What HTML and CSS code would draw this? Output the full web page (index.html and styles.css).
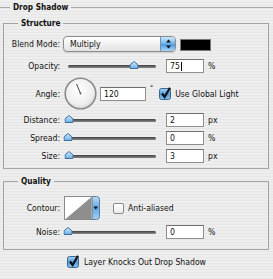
FILE: index.html
```html
<!DOCTYPE html>
<html lang="en">
<head>
    <meta charset="UTF-8">
    <meta name="viewport" content="width=device-width, initial-scale=1.0">
    <title>Drop Shadow</title>
    <link rel="stylesheet" href="styles.css">
</head>
<body>
    <div class="panel">
        <div class="panel-title"><span>Drop Shadow</span></div>

        <!-- Structure group -->
        <fieldset class="group group-structure">
            <legend>Structure</legend>
            <div class="rows">
                <div class="row row-blend">
                    <span class="label">Blend Mode:</span>
                    <div class="popup">
                        <span class="popup-text">Multiply</span>
                        <span class="popup-arrows">
                            <svg width="7" height="10" viewBox="0 0 7 10">
                                <path d="M3.5 0.5 L6 3.5 H1 Z" fill="#111"/>
                                <path d="M3.5 9.5 L6 6.5 H1 Z" fill="#111"/>
                            </svg>
                        </span>
                    </div>
                    <div class="swatch"></div>
                </div>

                <div class="row row-opacity">
                    <span class="label">Opacity:</span>
                    <div class="slider">
                        <div class="rail">
                            <div class="track"></div>
                            <svg class="thumb" style="left: 75%" width="9" height="8" viewBox="0 0 9 8">
                                <path d="M0.5 7.5 V3.8 L4.5 0.5 L8.5 3.8 V7.5 Z" fill="url(#thumbFill)" stroke="#3d6f9c" stroke-width="1"/>
                            </svg>
                        </div>
                    </div>
                    <div class="field">75<span class="caret"></span></div>
                    <span class="unit">%</span>
                </div>

                <div class="row row-angle">
                    <span class="label">Angle:</span>
                    <svg class="dial" width="33" height="33" viewBox="0 0 33 33">
                        <defs>
                            <radialGradient id="dialFill" cx="45%" cy="40%" r="65%">
                                <stop offset="0" stop-color="#ffffff"/>
                                <stop offset="0.7" stop-color="#eeeeee"/>
                                <stop offset="1" stop-color="#d2d2d2"/>
                            </radialGradient>
                        </defs>
                        <circle cx="16.5" cy="16.5" r="15.3" fill="url(#dialFill)" stroke="#8c8c8c" stroke-width="1.6"/>
                        <line x1="16.5" y1="16.5" x2="12.6" y2="7" stroke="#444" stroke-width="1"/>
                        <circle cx="16.5" cy="16.5" r="0.9" fill="#555"/>
                    </svg>
                    <div class="field field-angle">120</div>
                    <span class="degree">°</span>
                    <svg class="check" width="13" height="13" viewBox="0 0 13 13">
                        <defs>
                            <linearGradient id="checkFill" x1="0" y1="0" x2="0" y2="1">
                                <stop offset="0" stop-color="#a9d5f6"/>
                                <stop offset="0.5" stop-color="#4f9be0"/>
                                <stop offset="1" stop-color="#8cc6f2"/>
                            </linearGradient>
                        </defs>
                        <rect x="0.5" y="1.5" width="11" height="11" rx="2" fill="url(#checkFill)" stroke="#3a6690"/>
                        <path d="M3 6.5 L5.6 10 L11 0.8" fill="none" stroke="#111" stroke-width="2.2"/>
                    </svg>
                    <span class="check-text">Use Global Light</span>
                </div>

                <div class="row row-distance">
                    <span class="label">Distance:</span>
                    <div class="slider">
                        <div class="rail">
                            <div class="track"></div>
                            <svg class="thumb" style="left: 1%" width="9" height="8" viewBox="0 0 9 8">
                                <path d="M0.5 7.5 V3.8 L4.5 0.5 L8.5 3.8 V7.5 Z" fill="url(#thumbFill)" stroke="#3d6f9c" stroke-width="1"/>
                            </svg>
                        </div>
                    </div>
                    <div class="field">2</div>
                    <span class="unit">px</span>
                </div>

                <div class="row row-spread">
                    <span class="label">Spread:</span>
                    <div class="slider">
                        <div class="rail">
                            <div class="track"></div>
                            <svg class="thumb" style="left: 0%" width="9" height="8" viewBox="0 0 9 8">
                                <path d="M0.5 7.5 V3.8 L4.5 0.5 L8.5 3.8 V7.5 Z" fill="url(#thumbFill)" stroke="#3d6f9c" stroke-width="1"/>
                            </svg>
                        </div>
                    </div>
                    <div class="field">0</div>
                    <span class="unit">%</span>
                </div>

                <div class="row row-size">
                    <span class="label">Size:</span>
                    <div class="slider">
                        <div class="rail">
                            <div class="track"></div>
                            <svg class="thumb" style="left: 1%" width="9" height="8" viewBox="0 0 9 8">
                                <path d="M0.5 7.5 V3.8 L4.5 0.5 L8.5 3.8 V7.5 Z" fill="url(#thumbFill)" stroke="#3d6f9c" stroke-width="1"/>
                            </svg>
                        </div>
                    </div>
                    <div class="field">3</div>
                    <span class="unit">px</span>
                </div>
            </div>
        </fieldset>

        <!-- Quality group -->
        <fieldset class="group group-quality">
            <legend>Quality</legend>
            <div class="rows">
                <div class="row row-contour">
                    <span class="label">Contour:</span>
                    <svg class="contour" width="36" height="24" viewBox="0 0 36 24">
                        <defs>
                            <linearGradient id="stripFill" x1="0" y1="0" x2="0" y2="1">
                                <stop offset="0" stop-color="#b9ddf8"/>
                                <stop offset="0.5" stop-color="#5ea7e6"/>
                                <stop offset="1" stop-color="#a6d2f5"/>
                            </linearGradient>
                        </defs>
                        <path d="M28 0.5 H32.5 Q35.5 0.5 35.5 3.5 V20.5 Q35.5 23.5 32.5 23.5 H28 Z" fill="url(#stripFill)" stroke="#5b7fa0"/>
                        <rect x="0.5" y="0.5" width="27.5" height="23" fill="#fff" stroke="#8a8a8a"/>
                        <path d="M1 23.5 L27.5 1 V23.5 Z" fill="#8e8e8e"/>
                        <path d="M29.5 10.5 H34 L31.75 13.5 Z" fill="#111"/>
                    </svg>
                    <span class="box"></span>
                    <span class="check-text">Anti-aliased</span>
                </div>

                <div class="row row-noise">
                    <span class="label">Noise:</span>
                    <div class="slider">
                        <div class="rail">
                            <div class="track"></div>
                            <svg class="thumb" style="left: 0%" width="9" height="8" viewBox="0 0 9 8">
                                <path d="M0.5 7.5 V3.8 L4.5 0.5 L8.5 3.8 V7.5 Z" fill="url(#thumbFill)" stroke="#3d6f9c" stroke-width="1"/>
                            </svg>
                        </div>
                    </div>
                    <div class="field">0</div>
                    <span class="unit">%</span>
                </div>
            </div>
        </fieldset>

        <div class="row row-knocks">
            <svg class="check" width="13" height="13" viewBox="0 0 13 13">
                <rect x="0.5" y="1.5" width="11" height="11" rx="2" fill="url(#checkFill)" stroke="#3a6690"/>
                <path d="M3 6.5 L5.6 10 L11 0.8" fill="none" stroke="#111" stroke-width="2.2"/>
            </svg>
            <span class="check-text">Layer Knocks Out Drop Shadow</span>
        </div>
    </div>

    <!-- shared gradient for slider thumbs -->
    <svg class="defs" width="0" height="0">
        <defs>
            <linearGradient id="thumbFill" x1="0" y1="0" x2="0" y2="1">
                <stop offset="0" stop-color="#d4ecfc"/>
                <stop offset="1" stop-color="#6aaee6"/>
            </linearGradient>
        </defs>
    </svg>
</body>
</html>
```

FILE: styles.css
```css
* {
    margin: 0;
    padding: 0;
    box-sizing: border-box;
}

body {
    font-family: "DejaVu Sans Condensed", "DejaVu Sans", sans-serif;
    font-stretch: condensed;
    font-size: 8.6px;
    color: #111;
    background: repeating-linear-gradient(to bottom, #eeeeee 0, #eeeeee 2px, #e6e6e6 2px, #e6e6e6 3px);
    width: 273px;
    height: 279px;
    overflow: hidden;
}

.panel {
    display: flex;
    flex-direction: column;
}

/* Title with rule on both sides */
.panel-title {
    display: flex;
    align-items: center;
    height: 14px;
    line-height: 14px;
    font-weight: bold;
    font-size: 8.2px;
    gap: 3px;
}

.panel-title::before,
.panel-title::after {
    content: "";
    height: 1px;
    background-color: #a9a9a9;
}

.panel-title::before {
    width: 10px;
}

.panel-title::after {
    flex: 1;
}

/* Group boxes */
.group {
    border: 1px solid #a4a4a4;
    margin: 3px 4px 0 3px;
    padding: 0;
    min-width: 0;
}

.group legend {
    font-weight: bold;
    font-size: 8.2px;
    line-height: 12px;
    height: 12px;
    padding: 0 3px;
    margin-left: 14px;
}

.group-quality {
    margin-top: 6px;
}

.rows {
    display: flex;
    flex-direction: column;
}

.group-structure .rows {
    padding: 7px 0 5px;
}

.group-quality .rows {
    padding: 9px 0 10px;
}

.row {
    display: flex;
    align-items: center;
}

.label {
    width: 56px;
    margin-right: 4px;
    text-align: right;
    white-space: nowrap;
}

.row-blend {
    height: 16px;
}

.row-opacity {
    height: 14px;
    margin-top: 7px;
}

.row-angle {
    height: 33px;
    margin-top: 4px;
}

.row-distance {
    height: 14px;
    margin-top: 3px;
}

.row-spread,
.row-size {
    height: 14px;
    margin-top: 4px;
}

.row-contour {
    height: 24px;
}

.row-noise {
    height: 14px;
    margin-top: 5px;
}

.row-knocks {
    height: 13px;
    margin-top: 5px;
    padding-left: 67px;
}

/* Popup menu */
.popup {
    display: flex;
    align-items: center;
    width: 113px;
    height: 16px;
    margin-left: -1px;
    border: 1px solid #8c8c8c;
    border-radius: 4px;
    overflow: hidden;
    background: linear-gradient(to bottom, #ffffff, #f1f1f1 50%, #e2e2e2);
    box-shadow: 0 1px 1px rgba(0, 0, 0, 0.12);
}

.popup-text {
    flex: 1;
    padding-left: 6px;
}

.popup-arrows {
    display: flex;
    align-items: center;
    justify-content: center;
    width: 15px;
    height: 100%;
    border-left: 1px solid #6a92b8;
    background: linear-gradient(to bottom, #cde6fb, #7ab8ec 45%, #4f9ce2 55%, #a9d4f6);
}

.swatch {
    width: 31px;
    height: 12px;
    margin-left: 4px;
    margin-top: 2px;
    background-color: #000;
    border: 1px solid #777;
}

/* Sliders */
.slider {
    width: 96px;
    padding: 0 4px;
}

.rail {
    position: relative;
    height: 8px;
    display: flex;
    align-items: center;
}

.track {
    width: 100%;
    height: 3px;
    border-radius: 2px;
    background: linear-gradient(to bottom, #3f3f3f, #8a8a8a);
}

.thumb {
    position: absolute;
    top: -1px;
    transform: translateX(-50%);
}

/* Text fields */
.field {
    display: flex;
    align-items: center;
    width: 38px;
    height: 14px;
    margin-left: 6px;
    padding-left: 3px;
    background-color: #fff;
    border: 1px solid #8e8e8e;
    border-top-color: #6e6e6e;
}

.field-angle {
    width: 46px;
    margin-left: 3px;
}

.caret {
    width: 1px;
    height: 9px;
    margin-left: 1px;
    background-color: #000;
}

.unit {
    margin-left: 4px;
}

.degree {
    align-self: flex-start;
    margin: 8px 0 0 4px;
    font-size: 7px;
    line-height: 7px;
}

.check {
    flex: none;
    margin-left: 6px;
}

.row-knocks .check {
    margin-left: 0;
}

.check-text {
    margin-left: 3px;
    white-space: nowrap;
}

.row-knocks .check-text {
    margin-left: 4px;
}

/* Contour picker */
.contour {
    flex: none;
}

.box {
    width: 11px;
    height: 11px;
    margin: 0 1px 0 13px;
    border: 1px solid #8a8a8a;
    border-radius: 2px;
    background: linear-gradient(to bottom, #ffffff, #e9e9e9);
}

.defs {
    position: absolute;
}
```
